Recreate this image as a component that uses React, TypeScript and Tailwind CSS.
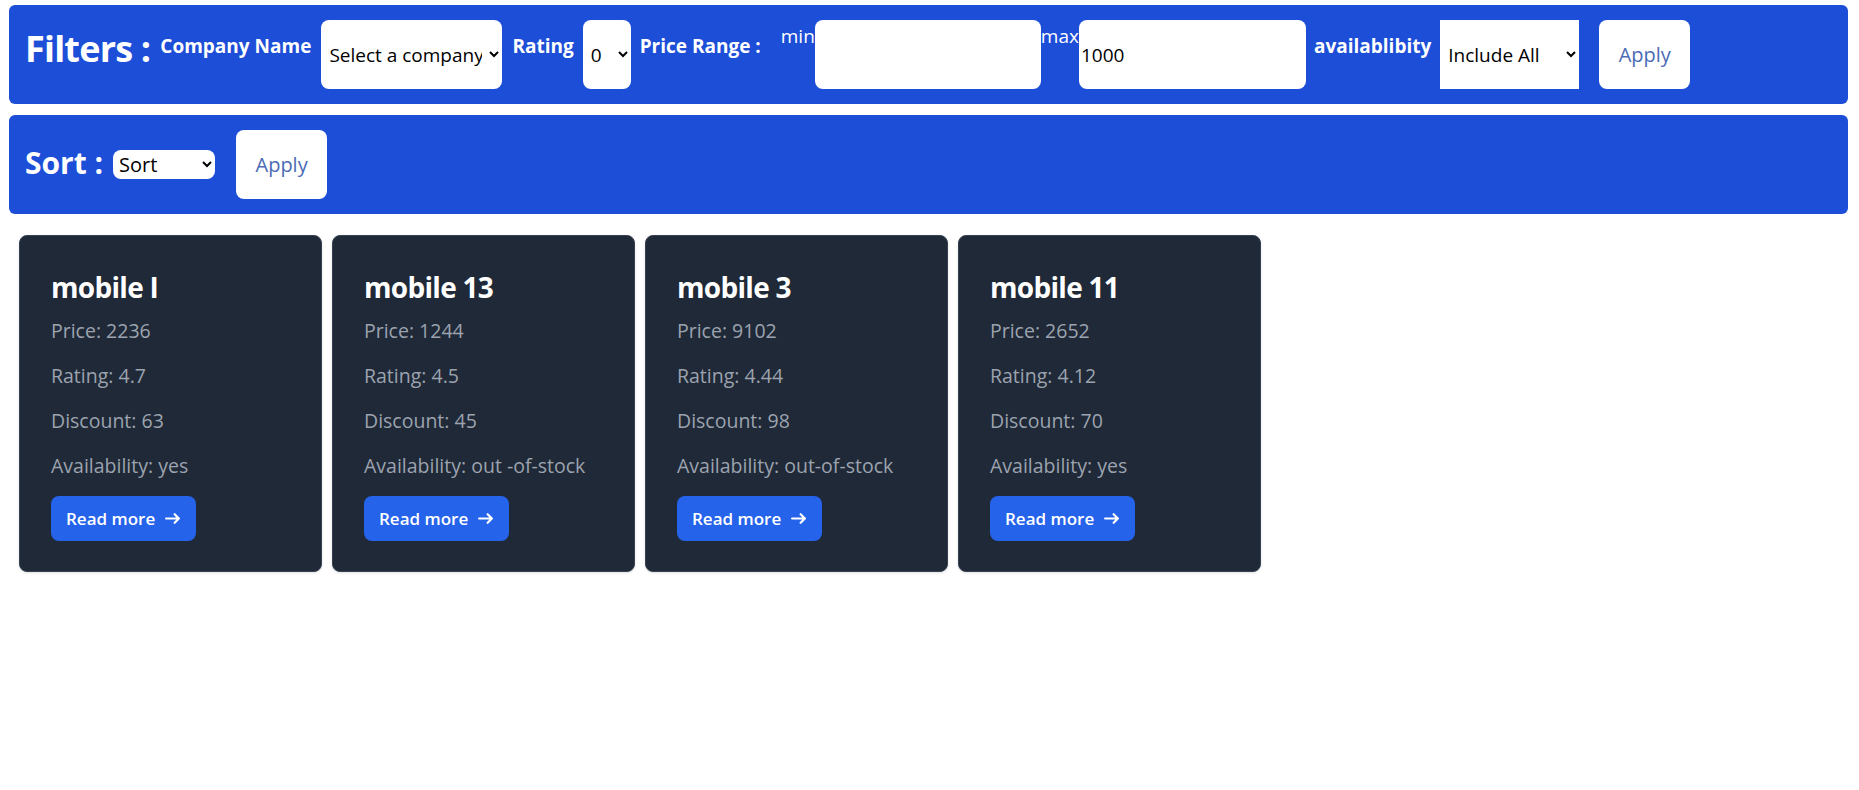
import { useState } from "react";

const mobiles = [
  { name: "mobile I", price: 2236, rating: 4.7, discount: 63, availability: "yes" },
  { name: "mobile 13", price: 1244, rating: 4.5, discount: 45, availability: "out -of-stock" },
  { name: "mobile 3", price: 9102, rating: 4.44, discount: 98, availability: "out-of-stock" },
  { name: "mobile 11", price: 2652, rating: 4.12, discount: 70, availability: "yes" },
];

function Card({ m }: { m: (typeof mobiles)[number] }) {
  const rows = [
    `Price: ${m.price}`,
    `Rating: ${m.rating}`,
    `Discount: ${m.discount}`,
    `Availability: ${m.availability}`,
  ];
  return (
    <div className="w-[303px] rounded-lg border border-[#374151] bg-[#1f2937] px-[31px] pt-[35px] pb-[30px] shadow">
      <h5 className="mb-[14px] text-[28px] leading-[32px] font-bold tracking-tight text-white">
        {m.name}
      </h5>
      {rows.map((r, i) => (
        <p
          key={r}
          className={
            i === 3
              ? "mb-[16px] text-[19.5px] leading-[28px] text-[#9ca3af]"
              : "mb-[17px] text-[19.5px] leading-[28px] text-[#9ca3af]"
          }
        >
          {r}
        </p>
      ))}
      <a
        href="#"
        className="inline-flex h-[45px] items-center rounded-lg bg-[#2563eb] pl-[15px] pr-[16px] text-[17px] font-semibold text-white"
      >
        Read more
        <svg className="ml-[10px] h-[15px] w-[15px]" viewBox="0 0 14 10" fill="none">
          <path
            stroke="currentColor"
            strokeLinecap="round"
            strokeLinejoin="round"
            strokeWidth="2"
            d="M1 5h12m0 0L9 1m4 4L9 9"
          />
        </svg>
      </a>
    </div>
  );
}

export default function App() {
  const [company, setCompany] = useState("");
  const [rating, setRating] = useState("0");
  const [min, setMin] = useState("");
  const [max, setMax] = useState("1000");
  const [avail, setAvail] = useState("all");
  const [sort, setSort] = useState("");

  return (
    <div
      className="min-h-screen bg-white pt-[5px] pl-[9px] pr-[11px]"
      style={{ fontFamily: '"Open Sans", "Noto Sans", sans-serif' }}
    >
      {/* filters */}
      <div className="flex h-[99px] items-start rounded-md bg-[#1d4ed8] px-4 pt-[15px] text-white">
        <h1 className="mt-[11px] text-[36px] leading-none font-bold tracking-[-0.8px]">Filters :</h1>
        <label className="ml-[10px] mt-[17px] text-[19px] leading-none font-bold">Company Name</label>
        <select
          className="ml-[10px] h-[69px] w-[181px] rounded-lg bg-white px-1 text-[19px] text-black"
          value={company}
          onChange={(e) => setCompany(e.currentTarget.value)}
        >
          <option value="">Select a company</option>
          <option value="AMZ">AMZ</option>
          <option value="FLP">FLP</option>
        </select>
        <label className="ml-[10px] mt-[17px] text-[19px] leading-none font-bold">Rating</label>
        <select
          className="ml-[9px] h-[69px] w-[48px] rounded-lg bg-white px-1 text-[19px] text-black"
          value={rating}
          onChange={(e) => setRating(e.currentTarget.value)}
        >
          <option value="0">0</option>
          <option value="1">1</option>
          <option value="2">2</option>
          <option value="3">3</option>
          <option value="4">4</option>
        </select>
        <label className="ml-[9px] mt-[17px] text-[19px] leading-none font-bold">Price Range :</label>
        <span className="ml-[20px] mt-[7px] text-[19px] leading-none">min</span>
        <input
          className="h-[69px] w-[226px] rounded-lg bg-white px-[2px] text-[19px] text-black outline-none"
          value={min}
          onChange={(e) => setMin(e.currentTarget.value)}
        />
        <span className="mt-[7px] text-[19px] leading-none">max</span>
        <input
          className="h-[69px] w-[227px] rounded-lg bg-white px-[2px] text-[19px] text-black outline-none"
          value={max}
          onChange={(e) => setMax(e.currentTarget.value)}
        />
        <label className="ml-[8px] mt-[17px] text-[19px] leading-none font-bold">availablibity</label>
        <select
          className="ml-[9px] h-[69px] w-[139px] bg-white px-1 text-[19px] text-black"
          value={avail}
          onChange={(e) => setAvail(e.currentTarget.value)}
        >
          <option value="all">Include All</option>
          <option value="yes">Available</option>
          <option value="no">Out of stock</option>
        </select>
        <button className="ml-[20px] h-[69px] w-[91px] rounded-lg bg-white text-[20px] text-[#4b6bb5]">
          Apply
        </button>
      </div>

      {/* sort */}
      <div className="mt-[11px] flex h-[99px] items-center rounded-md bg-[#1d4ed8] px-4 text-white">
        <h2 className="mb-[3px] text-[30px] leading-none font-bold">Sort :</h2>
        <select
          className="ml-[10px] h-[29px] w-[102px] rounded-lg bg-white px-0.5 text-[20px] text-black"
          value={sort}
          onChange={(e) => setSort(e.currentTarget.value)}
        >
          <option value="">Sort</option>
          <option value="price">Price</option>
          <option value="rating">Rating</option>
          <option value="discount">Discount</option>
        </select>
        <button className="ml-[21px] h-[69px] w-[91px] rounded-lg bg-white text-[20px] text-[#4b6bb5]">
          Apply
        </button>
      </div>

      {/* products */}
      <div className="mt-[21px] flex gap-[10px] pl-[10px]">
        {mobiles.map((m) => (
          <Card key={m.name} m={m} />
        ))}
      </div>
    </div>
  );
}
